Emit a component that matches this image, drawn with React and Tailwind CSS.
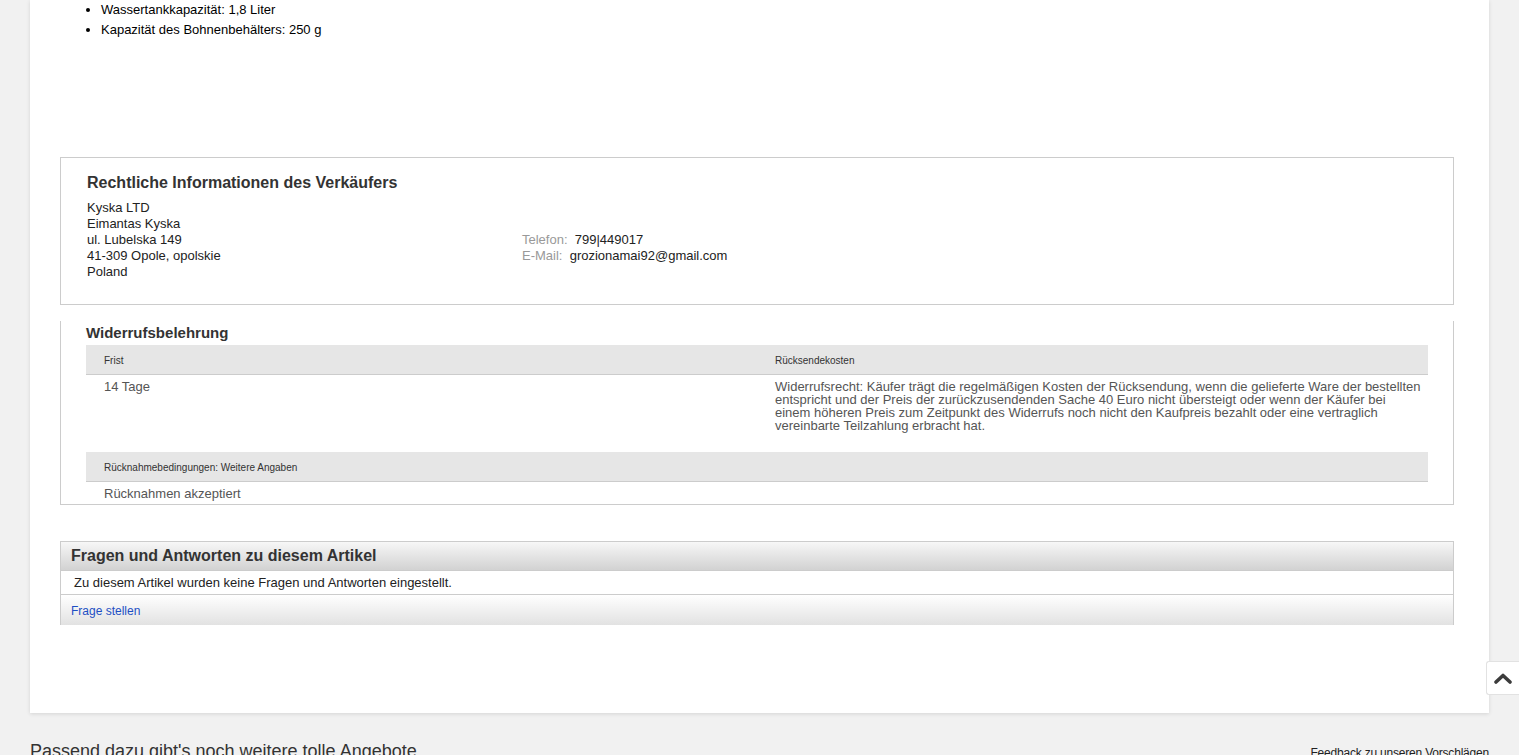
import React from 'react';

// Kleine Tabellen-Kopfzeile
const HeadCell = ({ children }) => (
  <div className="w-1/2 pl-[18px] text-[10px] text-[#333] leading-[29px] pt-[1px]">{children}</div>
);

export default function App() {
  return (
    <div className="relative min-h-screen bg-[#f1f1f1] font-['Liberation_Sans',Arial,sans-serif] text-[#222] overflow-hidden">
      <div className="ml-[30px] w-[1459px] bg-white shadow-[0_1px_4px_rgba(0,0,0,0.12)] pb-[88px]">
        {/* Produktmerkmale */}
        <ul className="list-disc pl-[71px] text-[13px] leading-[20px] text-black">
          <li>Wassertankkapazität: 1,8 Liter</li>
          <li>Kapazität des Bohnenbehälters: 250 g</li>
        </ul>

        {/* Rechtliche Informationen */}
        <div className="ml-[30px] w-[1394px] mt-[117px] border border-[#ccc] pl-[26px] pt-[16px] pb-[24px]">
          <h2 className="text-[16px] font-bold leading-[18px] text-[#333] mb-[8px]">
            Rechtliche Informationen des Verkäufers
          </h2>
          <div className="flex text-[13px] leading-[16px] text-[#222]">
            <div className="w-[435px]">
              <div>Kyska LTD</div>
              <div>Eimantas Kyska</div>
              <div>ul. Lubelska 149</div>
              <div>41-309 Opole, opolskie</div>
              <div>Poland</div>
            </div>
            <div className="pt-[32px]">
              <div>
                <span className="text-[#999]">Telefon:</span>&nbsp; 799|449017
              </div>
              <div>
                <span className="text-[#999]">E-Mail:</span>&nbsp; grozionamai92@gmail.com
              </div>
            </div>
          </div>
        </div>

        {/* Widerrufsbelehrung */}
        <div className="ml-[30px] w-[1394px] mt-[16px] border-x border-b border-[#ccc] px-[25px] pt-[3px] pb-[3px]">
          <h3 className="text-[15px] font-bold leading-[18px] text-[#333] mb-[3px]">Widerrufsbelehrung</h3>
          <div className="w-[1342px]">
            <div className="flex bg-[#e6e6e6] border-b border-[#ccc] h-[30px]">
              <HeadCell>Frist</HeadCell>
              <HeadCell>Rücksendekosten</HeadCell>
            </div>
            <div className="flex text-[13px] leading-[13px] text-[#555] pt-[5px] pb-[20px]">
              <div className="w-1/2 pl-[18px]">14 Tage</div>
              <div className="w-1/2 pl-[18px] pr-[5px]">
                Widerrufsrecht: Käufer trägt die regelmäßigen Kosten der Rücksendung, wenn die gelieferte Ware der bestellten entspricht und der Preis der zurückzusendenden Sache 40 Euro nicht übersteigt oder wenn der Käufer bei einem höheren Preis zum Zeitpunkt des Widerrufs noch nicht den Kaufpreis bezahlt oder eine vertraglich vereinbarte Teilzahlung erbracht hat.
              </div>
            </div>
            <div className="flex bg-[#e6e6e6] border-b border-[#ccc] h-[30px]">
              <div className="pl-[18px] text-[10px] text-[#333] leading-[29px] pt-[1px]">Rücknahmebedingungen: Weitere Angaben</div>
            </div>
            <div className="pl-[18px] pt-[4px] text-[13px] leading-[15px] text-[#555]">Rücknahmen akzeptiert</div>
          </div>
        </div>

        {/* Fragen und Antworten */}
        <div className="ml-[30px] w-[1394px] mt-[36px] border-x border-t border-[#ccc]">
          <div className="h-[29px] bg-gradient-to-b from-[#f7f7f7] to-[#d2d2d2] border-b border-[#ccc] pl-[10px] flex items-center">
            <span className="text-[16px] font-bold text-[#333]">Fragen und Antworten zu diesem Artikel</span>
          </div>
          <div className="h-[24px] bg-white border-b border-[#ccc] pl-[13px] flex items-center text-[13px] text-[#222]">
            Zu diesem Artikel wurden keine Fragen und Antworten eingestellt.
          </div>
          <div className="h-[30px] bg-gradient-to-b from-white to-[#e2e2e2] pl-[10px] pt-[2px] flex items-center">
            <a href="#" className="text-[12px] text-[#1d4fc4]">Frage stellen</a>
          </div>
        </div>
      </div>

      {/* Nach oben */}
      <button className="absolute right-0 top-[661px] w-[33px] h-[34px] bg-white border border-r-0 border-[#e2e2e2] rounded-l-[3px] flex items-center justify-center">
        <svg width="18" height="12" viewBox="0 0 18 12">
          <path d="M2 10 L9 3.5 L16 10" fill="none" stroke="#3c3c3c" strokeWidth="3.6" strokeLinecap="round" strokeLinejoin="round" />
        </svg>
      </button>

      {/* Weitere Angebote */}
      <div className="ml-[30px] w-[1459px] mt-[27px] flex items-baseline justify-between">
        <h2 className="text-[18px] text-[#333] leading-[22px]">Passend dazu gibt's noch weitere tolle Angebote</h2>
        <a href="#" className="text-[12px] tracking-[-0.2px] text-[#222]">Feedback zu unseren Vorschlägen</a>
      </div>
    </div>
  );
}
